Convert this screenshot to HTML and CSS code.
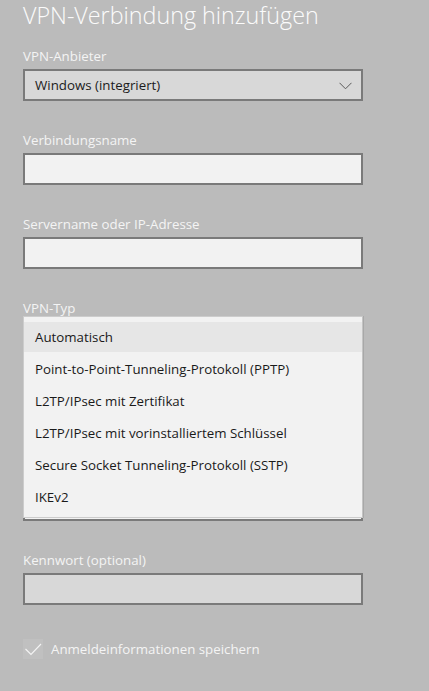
FILE: index.html
```html
<!DOCTYPE html>
<html lang="de">
<head>
<meta charset="utf-8">
<title>VPN-Verbindung hinzufügen</title>
<link rel="stylesheet" href="styles.css">
</head>
<body>
<main class="page">
  <h1 class="title">VPN-Verbindung hinzufügen</h1>

  <div class="field">
    <label class="label">VPN-Anbieter</label>
    <div class="combo">
      <span class="combo-text">Windows (integriert)</span>
      <svg class="chevron" width="13" height="8" viewBox="0 0 13 8"><polyline points="0.5,0.8 6.5,6.8 12.5,0.8" fill="none" stroke="#5a5a5a" stroke-width="1"/></svg>
    </div>
  </div>

  <div class="field">
    <label class="label">Verbindungsname</label>
    <div class="input"></div>
  </div>

  <div class="field">
    <label class="label">Servername oder IP-Adresse</label>
    <div class="input"></div>
  </div>

  <div class="field field-open">
    <label class="label">VPN-Typ</label>
    <div class="combo"></div>
    <ul class="popup">
      <li class="item item-active">Automatisch</li>
      <li class="item">Point-to-Point-Tunneling-Protokoll (PPTP)</li>
      <li class="item">L2TP/IPsec mit Zertifikat</li>
      <li class="item">L2TP/IPsec mit vorinstalliertem Schlüssel</li>
      <li class="item">Secure Socket Tunneling-Protokoll (SSTP)</li>
      <li class="item">IKEv2</li>
    </ul>
  </div>

  <div class="field">
    <div class="label-space"></div>
    <div class="combo"></div>
  </div>

  <div class="field">
    <div class="label-space"></div>
    <div class="input"></div>
  </div>

  <div class="field">
    <label class="label">Kennwort (optional)</label>
    <div class="input input-disabled"></div>
  </div>

  <div class="check-row">
    <span class="checkbox">
      <svg width="20" height="20" viewBox="0 0 20 20"><polyline points="2.5,10 8,15.5 18,5" fill="none" stroke="#f4f4f4" stroke-width="1.1"/></svg>
    </span>
    <span class="check-label">Anmeldeinformationen speichern</span>
  </div>
</main>
</body>
</html>
```

FILE: styles.css
```css
html, body {
  margin: 0;
  padding: 0;
  background: #bbbbbb;
}

body {
  font-family: "Open Sans", "Noto Sans", "Liberation Sans", sans-serif;
  color: #f4f4f4;
  overflow: hidden;
}

.page {
  padding: 0 0 0 23px;
  width: 340px;
}

.title {
  margin: 0;
  font-size: 23.3px;
  font-weight: 300;
  line-height: 31px;
  height: 46px;
  color: #fbfbfb;
  white-space: nowrap;
}

.field {
  margin-bottom: 29px;
  position: relative;
}

.label {
  display: block;
  font-size: 13.3px;
  line-height: 20px;
  height: 20px;
  margin-bottom: 3px;
  color: #f4f4f4;
}

.label-space {
  height: 20px;
  margin-bottom: 3px;
}

.combo, .input {
  box-sizing: border-box;
  height: 32px;
  width: 340px;
  border: 2px solid #7a7a7a;
}

.combo {
  background: #d8d8d8;
  display: flex;
  align-items: center;
  justify-content: space-between;
  padding: 0 9px 0 10px;
}

.combo-text {
  font-size: 13.3px;
  color: #1c1c1c;
}

.chevron {
  display: block;
  margin-top: 1px;
}

.input {
  background: #f2f2f2;
}

.input-disabled {
  background: #d8d8d8;
}

.popup {
  position: absolute;
  left: 0;
  top: 18px;
  z-index: 5;
  box-sizing: border-box;
  width: 340px;
  margin: 0;
  padding: 4px 0 5px;
  list-style: none;
  background: #f2f2f2;
  border: 1px solid #cccccc;
  border-right-color: #c4c4c4;
  box-shadow: 1px 0 0 #a8a8a8;
}

.item {
  height: 30px;
  margin-top: 2px;
  display: flex;
  align-items: center;
  padding-left: 11px;
  font-size: 13.3px;
  color: #1a1a1a;
}

.item:first-child {
  margin-top: 1px;
}

.item-active {
  background: #e6e6e6;
}

.check-row {
  display: flex;
  align-items: center;
  gap: 8px;
  margin-top: 34px;
}

.checkbox {
  width: 20px;
  height: 20px;
  background: #c0c0c0;
  display: block;
}

.checkbox svg {
  display: block;
}

.check-label {
  font-size: 13.3px;
  color: #f4f4f4;
}
```
